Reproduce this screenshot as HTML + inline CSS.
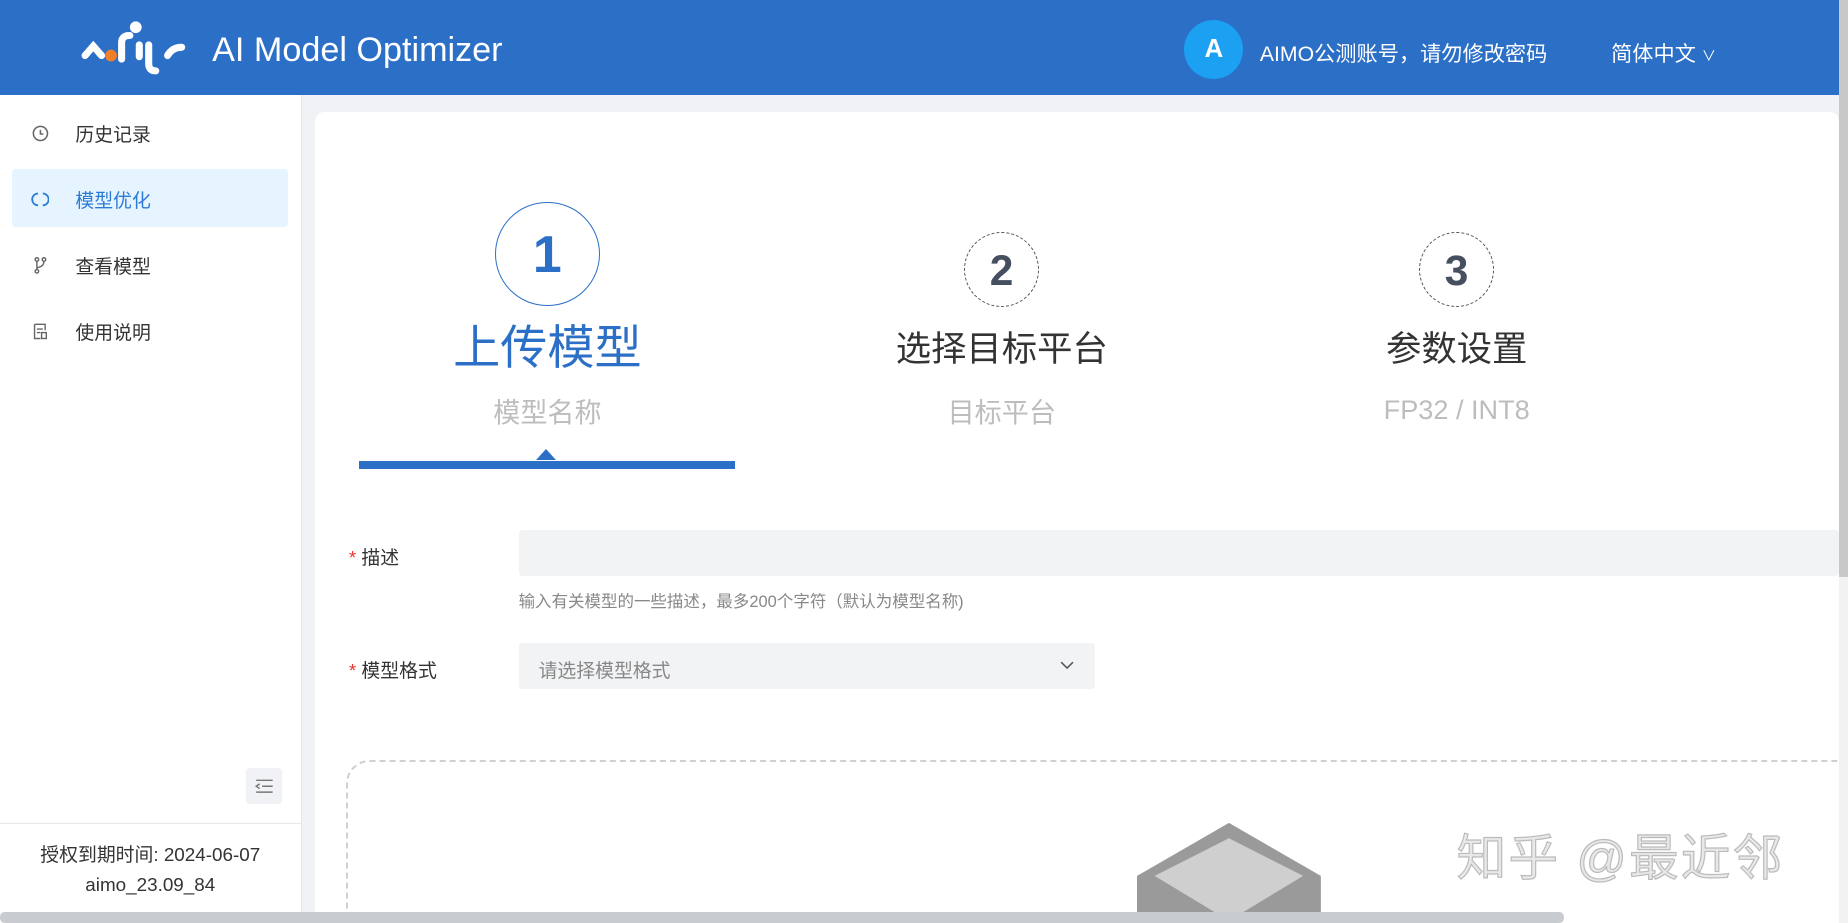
<!DOCTYPE html>
<html><head><meta charset="utf-8"><style>
html,body{margin:0;padding:0;overflow:hidden;width:1848px;height:923px;}
#w{zoom:1.17857;width:1568px;height:783px;overflow:hidden;position:relative;background:#f0f2f5;font-family:"Liberation Sans","Noto Sans CJK SC",sans-serif;}
.a{position:absolute;}
.hdr{left:0;top:0;width:1560px;height:81px;background:#2b6fc7;}
.sb{left:0;top:81px;width:255px;height:702px;background:#fff;border-right:1px solid #e8e8e8;}
.item{position:absolute;left:64px;font-size:16px;color:#333;}
.ico{position:absolute;left:26px;}
.card{left:267px;top:95px;width:1293px;height:688px;background:#fff;border-radius:8px 8px 0 0;}
.gray{color:#bdbdbd;font-size:23px;}
</style></head><body><div id="w">
<div class="a hdr"></div>
<svg class="a" style="left:66px;top:16px" width="96" height="50" viewBox="0 0 96 50">
<g fill="none" stroke="#fff" stroke-width="6" stroke-linecap="round">
<path d="M6 31 L13 23 L20 31"/>
<path d="M37 34 L37 20 Q37 14 44 14"/>
<path d="M52 22 L52 32 M60 22 L60 38 Q60 44 66 44"/>
<path d="M76 31 Q80 24 88 24"/>
</g>
<circle cx="28" cy="31" r="5" fill="#f07f2a"/>
<circle cx="49" cy="7" r="5" fill="#fff"/>
</svg>
<div class="a" style="left:180px;top:26px;font-size:29px;color:#fff;">AI Model Optimizer</div>
<div class="a" style="left:1005px;top:17px;width:50px;height:50px;border-radius:50%;background:#1ba0f2;color:#fff;font-size:22px;font-weight:bold;text-align:center;line-height:50px;">A</div>
<div class="a" style="left:1069px;top:31px;font-size:18px;color:#fff;">AIMO公测账号，请勿修改密码</div>
<div class="a" style="left:1367px;top:31px;font-size:18px;color:#fff;">简体中文 <span style="font-size:12px">&#8744;</span></div>
<div class="a" style="left:1560px;top:0;width:8px;height:490px;background:#c8c8c8;"></div>
<div class="a" style="left:1560px;top:490px;width:8px;height:293px;background:#f2f2f2;"></div>

<div class="a sb">
<div class="item" style="top:21px">历史记录</div>
<svg class="ico" style="top:24px" width="16" height="16" viewBox="0 0 16 16"><circle cx="8" cy="8" r="6" fill="none" stroke="#666" stroke-width="1.3"/><path d="M8 5v3.5h2.5" fill="none" stroke="#666" stroke-width="1.3"/></svg>
<div class="a" style="left:10px;top:62px;width:234px;height:50px;background:#e6f4ff;border-radius:3px;"></div>
<div class="item" style="top:77px;color:#2b7bd6">模型优化</div>
<svg class="ico" style="top:80px" width="16" height="16" viewBox="0 0 16 16"><path d="M6 3 A5 5 0 0 0 6 13 M10 3 A5 5 0 0 1 10 13" fill="none" stroke="#2b7bd6" stroke-width="1.5"/></svg>
<div class="item" style="top:133px">查看模型</div>
<svg class="ico" style="top:136px" width="16" height="16" viewBox="0 0 16 16"><g fill="none" stroke="#666" stroke-width="1.2"><circle cx="5" cy="3" r="1.5"/><circle cx="11" cy="3" r="1.5"/><circle cx="5" cy="13" r="1.5"/><path d="M5 4.5v7 M11 4.5 Q11 9 5 10"/></g></svg>
<div class="item" style="top:189px">使用说明</div>
<svg class="ico" style="top:192px" width="16" height="16" viewBox="0 0 16 16"><g fill="none" stroke="#666" stroke-width="1.2"><path d="M3 2h9v5 M3 2v12h5 M5 6h5 M5 9h3"/><rect x="9" y="9" width="4" height="5"/></g></svg>
<div class="a" style="left:209px;top:571px;width:30px;height:30px;background:#f0f2f5;border-radius:3px;"></div>
<svg class="a" style="left:216px;top:579px" width="16" height="14" viewBox="0 0 16 14"><path d="M1 2h14 M6 7h9 M1 12h14 M4 5 L1 7 L4 9" fill="none" stroke="#777" stroke-width="1.2"/></svg>
<div class="a" style="left:0;top:617px;width:255px;height:1px;background:#e8e8e8;"></div>
<div class="a" style="left:0;top:632px;width:255px;text-align:center;font-size:16px;color:#333;">授权到期时间: 2024-06-07</div>
<div class="a" style="left:0;top:661px;width:255px;text-align:center;font-size:16px;color:#333;">aimo_23.09_84</div>
</div>

<div class="a card"></div>
<div class="a" style="left:420px;top:171px;width:87px;height:87px;border:1px solid #2b6fc7;border-radius:50%;text-align:center;line-height:88px;font-size:44px;font-weight:bold;color:#2b6fc7;">1</div>
<div class="a" style="left:305px;top:262px;width:319px;text-align:center;font-size:40px;color:#2b6fc7;">上传模型</div>
<div class="a gray" style="left:305px;top:332px;width:319px;text-align:center;">模型名称</div>
<div class="a" style="left:305px;top:391px;width:319px;height:7px;background:#2b6fc7;"></div>
<div class="a" style="left:455px;top:381px;width:0;height:0;border-left:9px solid transparent;border-right:9px solid transparent;border-bottom:10px solid #2b6fc7;"></div>

<div class="a" style="left:818px;top:197px;width:62px;height:62px;border:1px dashed #555;border-radius:50%;text-align:center;line-height:64px;font-size:36px;font-weight:bold;color:#454f5f;">2</div>
<div class="a" style="left:700px;top:272px;width:300px;text-align:center;font-size:30px;color:#333;">选择目标平台</div>
<div class="a gray" style="left:700px;top:332px;width:300px;text-align:center;">目标平台</div>

<div class="a" style="left:1204px;top:197px;width:62px;height:62px;border:1px dashed #555;border-radius:50%;text-align:center;line-height:64px;font-size:36px;font-weight:bold;color:#454f5f;">3</div>
<div class="a" style="left:1086px;top:272px;width:300px;text-align:center;font-size:30px;color:#333;">参数设置</div>
<div class="a gray" style="left:1086px;top:334px;width:300px;text-align:center;">FP32 / INT8</div>

<div class="a" style="left:296px;top:461px;font-size:16px;color:#333;"><span style="color:#e33">*</span> 描述</div>
<div class="a" style="left:440px;top:450px;width:1120px;height:39px;background:#f2f3f5;border-radius:3px;"></div>
<div class="a" style="left:440px;top:499px;font-size:14px;color:#888;">输入有关模型的一些描述，最多200个字符（默认为模型名称)</div>
<div class="a" style="left:296px;top:557px;font-size:16px;color:#333;"><span style="color:#e33">*</span> 模型格式</div>
<div class="a" style="left:440px;top:546px;width:489px;height:39px;background:#f2f3f5;border-radius:3px;"></div>
<div class="a" style="left:457px;top:557px;font-size:16px;color:#888;">请选择模型格式</div>
<svg class="a" style="left:899px;top:561px" width="12" height="8" viewBox="0 0 12 8"><path d="M1 1l5 5 5-5" fill="none" stroke="#555" stroke-width="1.3"/></svg>

<div class="a" style="left:294px;top:645px;width:1264px;height:136px;border:2px dashed #d0d0d0;border-bottom:none;border-right:none;border-radius:20px 0 0 0;"></div>
<svg class="a" style="left:965px;top:693px" width="156" height="90" viewBox="0 0 156 90"><path d="M0 90 V50 L78 5 L156 50 V90 Z" fill="#9a9a9a"/><path d="M15 50 L78 18 L141 50 L78 88 Z" fill="#cfcfcf"/></svg>
<div class="a" style="left:1236px;top:695px;font-size:42px;color:#e8e8e8;-webkit-text-stroke:1px #bbb;letter-spacing:2px;">知乎 @最近邻</div>
<div class="a" style="left:0;top:774px;width:1327px;height:9px;background:#c8ccd0;border-radius:4px;"></div>
</div></body></html>
